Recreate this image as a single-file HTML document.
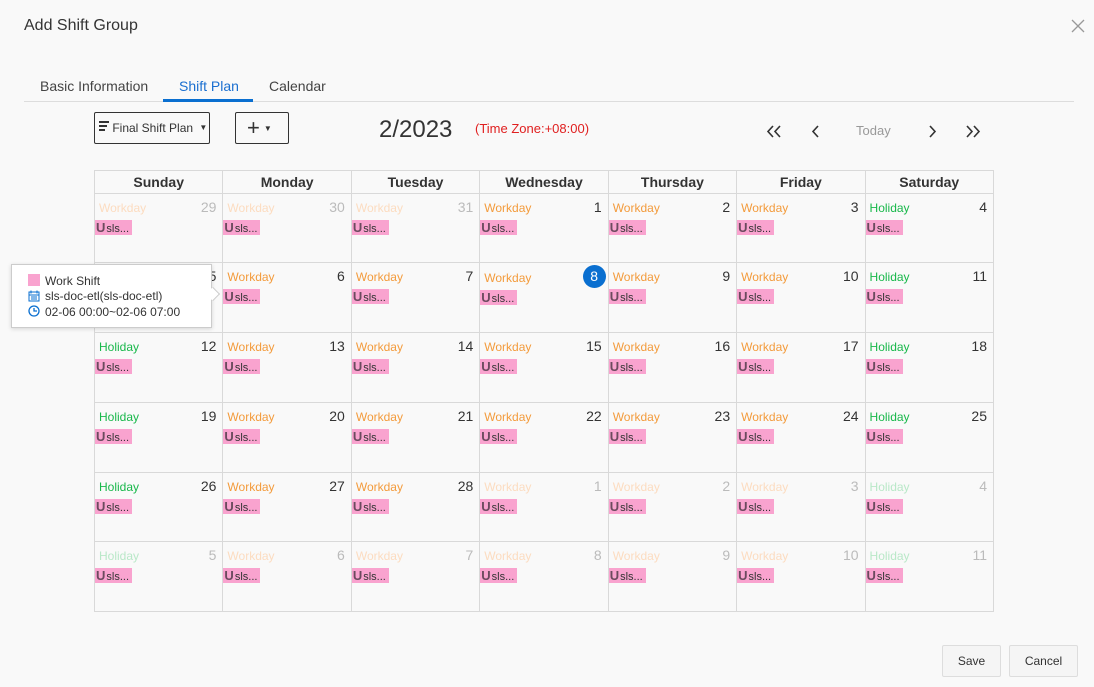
<!DOCTYPE html><html><head><style>
*{box-sizing:border-box}
body{margin:0;width:1094px;height:687px;background:#f9f9f9;font-family:"Liberation Sans",sans-serif;color:#333;position:relative;overflow:hidden}
.a{position:absolute}
table{position:absolute;left:94px;top:170px;width:900px;border-collapse:collapse;table-layout:fixed}
td,th{border:1px solid #d9d9d9;padding:0;position:relative}
th{height:23px;font-size:14px;font-weight:bold;color:#333}
td{height:69px;vertical-align:top}
tr.r70 td{height:70px}
.l{position:absolute;left:4px;top:7px;font-size:12px;color:#f39b3c}
.h .l{color:#19b84b}
.f .l{color:#fcdcc0}
.f.h .l{color:#b9e8c8}
.n{position:absolute;right:6px;top:5px;font-size:14px;color:#333}
.f .n{color:#bbb}
.t{position:absolute;left:0px;top:26px;width:37px;height:15px;background:#f9a3cf;font-size:11px;line-height:15px;padding-left:1px;color:#333;white-space:nowrap}
.t b{color:#6b4a5e;font-size:13px;margin-right:1px}
.btn{position:absolute;border:1px solid #ddd;background:#f5f5f5;font-size:12px;text-align:center;line-height:30px;color:#333;border-radius:2px}
</style></head><body>
<div class="a" style="left:24px;top:17px;font-size:16px;color:#333">Add Shift Group</div>
<svg class="a" style="left:1071px;top:19px" width="14" height="14" viewBox="0 0 14 14"><path d="M1 1L13 13M13 1L1 13" stroke="#999" stroke-width="1.3"/></svg>
<div class="a" style="left:40px;top:78px;font-size:14px;color:#444">Basic Information</div>
<div class="a" style="left:179px;top:78px;font-size:14px;color:#1a6fd0">Shift Plan</div>
<div class="a" style="left:269px;top:78px;font-size:14px;color:#444">Calendar</div>
<div class="a" style="left:24px;top:101px;width:1050px;height:1px;background:#ddd"></div>
<div class="a" style="left:163px;top:99px;width:90px;height:3px;background:#0a6fd0"></div>
<div class="a" style="left:94px;top:112px;width:116px;height:32px;border:1px solid #333;border-radius:2px;font-size:12px;line-height:29px;padding-left:4px">
<span style="display:inline-block;width:10px;vertical-align:1px"><span style="display:block;height:2px;background:#333;margin-bottom:2px"></span><span style="display:block;height:2px;background:#333;margin-bottom:2px;width:8px"></span><span style="display:block;height:2px;background:#333;width:6px"></span></span> Final Shift Plan <span style="font-size:8px;margin-left:3px;vertical-align:2px">▼</span></div>
<div class="a" style="left:235px;top:112px;width:54px;height:32px;border:1px solid #333;border-radius:2px;font-size:22px;line-height:29px;padding-left:11px">+<span style="font-size:8px;vertical-align:4px;margin-left:4px">▼</span></div>
<div class="a" style="left:379px;top:116px;font-size:24px;color:#333">2/2023</div>
<div class="a" style="left:475px;top:121px;font-size:13px;color:#e02020">(Time Zone:+08:00)</div>
<svg class="a" style="left:766px;top:125px" width="16" height="13" viewBox="0 0 16 13"><path d="M7 1L2 6.5L7 12M14 1L9 6.5L14 12" fill="none" stroke="#333" stroke-width="1.6"/></svg>
<svg class="a" style="left:810px;top:125px" width="10" height="13" viewBox="0 0 10 13"><path d="M8 1L3 6.5L8 12" fill="none" stroke="#333" stroke-width="1.6"/></svg>
<div class="a" style="left:856px;top:123px;font-size:13px;color:#999">Today</div>
<svg class="a" style="left:928px;top:125px" width="10" height="13" viewBox="0 0 10 13"><path d="M2 1L7 6.5L2 12" fill="none" stroke="#333" stroke-width="1.6"/></svg>
<svg class="a" style="left:965px;top:125px" width="16" height="13" viewBox="0 0 16 13"><path d="M2 1L7 6.5L2 12M9 1L14 6.5L9 12" fill="none" stroke="#333" stroke-width="1.6"/></svg>
<table>
<tr><th>Sunday</th><th>Monday</th><th>Tuesday</th><th>Wednesday</th><th>Thursday</th><th>Friday</th><th>Saturday</th></tr>
<tr>
<td class="f"><span class="l">Workday</span><span class="n">29</span><div class="t"><b>U</b>sls...</div></td>
<td class="f"><span class="l">Workday</span><span class="n">30</span><div class="t"><b>U</b>sls...</div></td>
<td class="f"><span class="l">Workday</span><span class="n">31</span><div class="t"><b>U</b>sls...</div></td>
<td><span class="l">Workday</span><span class="n">1</span><div class="t"><b>U</b>sls...</div></td>
<td><span class="l">Workday</span><span class="n">2</span><div class="t"><b>U</b>sls...</div></td>
<td><span class="l">Workday</span><span class="n">3</span><div class="t"><b>U</b>sls...</div></td>
<td class="h"><span class="l">Holiday</span><span class="n">4</span><div class="t"><b>U</b>sls...</div></td></tr>
<tr class="r70">
<td class="h"><span class="l">Holiday</span><span class="n">5</span><div class="t"><b>U</b>sls...</div></td>
<td><span class="l">Workday</span><span class="n">6</span><div class="t"><b>U</b>sls...</div></td>
<td><span class="l">Workday</span><span class="n">7</span><div class="t"><b>U</b>sls...</div></td>
<td><span class="l" style="top:8px">Workday</span><span class="n" style="right:2px;top:2px;width:23px;height:23px;border-radius:50%;background:#0a6fd0;color:#fff;text-align:center;line-height:23px">8</span><div class="t" style="top:27px"><b>U</b>sls...</div></td>
<td><span class="l">Workday</span><span class="n">9</span><div class="t"><b>U</b>sls...</div></td>
<td><span class="l">Workday</span><span class="n">10</span><div class="t"><b>U</b>sls...</div></td>
<td class="h"><span class="l">Holiday</span><span class="n">11</span><div class="t"><b>U</b>sls...</div></td></tr>
<tr class="r70">
<td class="h"><span class="l">Holiday</span><span class="n">12</span><div class="t"><b>U</b>sls...</div></td>
<td><span class="l">Workday</span><span class="n">13</span><div class="t"><b>U</b>sls...</div></td>
<td><span class="l">Workday</span><span class="n">14</span><div class="t"><b>U</b>sls...</div></td>
<td><span class="l">Workday</span><span class="n">15</span><div class="t"><b>U</b>sls...</div></td>
<td><span class="l">Workday</span><span class="n">16</span><div class="t"><b>U</b>sls...</div></td>
<td><span class="l">Workday</span><span class="n">17</span><div class="t"><b>U</b>sls...</div></td>
<td class="h"><span class="l">Holiday</span><span class="n">18</span><div class="t"><b>U</b>sls...</div></td></tr>
<tr class="r70">
<td class="h"><span class="l">Holiday</span><span class="n">19</span><div class="t"><b>U</b>sls...</div></td>
<td><span class="l">Workday</span><span class="n">20</span><div class="t"><b>U</b>sls...</div></td>
<td><span class="l">Workday</span><span class="n">21</span><div class="t"><b>U</b>sls...</div></td>
<td><span class="l">Workday</span><span class="n">22</span><div class="t"><b>U</b>sls...</div></td>
<td><span class="l">Workday</span><span class="n">23</span><div class="t"><b>U</b>sls...</div></td>
<td><span class="l">Workday</span><span class="n">24</span><div class="t"><b>U</b>sls...</div></td>
<td class="h"><span class="l">Holiday</span><span class="n">25</span><div class="t"><b>U</b>sls...</div></td></tr>
<tr>
<td class="h"><span class="l">Holiday</span><span class="n">26</span><div class="t"><b>U</b>sls...</div></td>
<td><span class="l">Workday</span><span class="n">27</span><div class="t"><b>U</b>sls...</div></td>
<td><span class="l">Workday</span><span class="n">28</span><div class="t"><b>U</b>sls...</div></td>
<td class="f"><span class="l">Workday</span><span class="n">1</span><div class="t"><b>U</b>sls...</div></td>
<td class="f"><span class="l">Workday</span><span class="n">2</span><div class="t"><b>U</b>sls...</div></td>
<td class="f"><span class="l">Workday</span><span class="n">3</span><div class="t"><b>U</b>sls...</div></td>
<td class="f h"><span class="l">Holiday</span><span class="n">4</span><div class="t"><b>U</b>sls...</div></td></tr>
<tr class="r70">
<td class="f h"><span class="l">Holiday</span><span class="n">5</span><div class="t"><b>U</b>sls...</div></td>
<td class="f"><span class="l">Workday</span><span class="n">6</span><div class="t"><b>U</b>sls...</div></td>
<td class="f"><span class="l">Workday</span><span class="n">7</span><div class="t"><b>U</b>sls...</div></td>
<td class="f"><span class="l">Workday</span><span class="n">8</span><div class="t"><b>U</b>sls...</div></td>
<td class="f"><span class="l">Workday</span><span class="n">9</span><div class="t"><b>U</b>sls...</div></td>
<td class="f"><span class="l">Workday</span><span class="n">10</span><div class="t"><b>U</b>sls...</div></td>
<td class="f h"><span class="l">Holiday</span><span class="n">11</span><div class="t"><b>U</b>sls...</div></td></tr>
</table>
<div class="a" style="left:11px;top:264px;width:201px;height:64px;background:#fff;border:1px solid #ccc;box-shadow:0 1px 4px rgba(0,0,0,.15);font-size:12px;color:#333">
<div class="a" style="left:16px;top:9px;width:12px;height:12px;background:#f9a3cf"></div>
<div class="a" style="left:33px;top:9px">Work Shift</div>
<svg class="a" style="left:16px;top:25px" width="12" height="12" viewBox="0 0 12 12"><rect x="1" y="2" width="10" height="9" fill="none" stroke="#0a6fd0"/><path d="M1 5h10M3 0.5v3M9 0.5v3M3 7h6M3 9h6" stroke="#0a6fd0"/></svg>
<div class="a" style="left:33px;top:24px">sls-doc-etl(sls-doc-etl)</div>
<svg class="a" style="left:16px;top:40px" width="12" height="12" viewBox="0 0 12 12"><circle cx="6" cy="6" r="5" fill="none" stroke="#0a6fd0" stroke-width="1.3"/><path d="M6 3v3h3" fill="none" stroke="#0a6fd0" stroke-width="1.3"/></svg>
<div class="a" style="left:33px;top:40px">02-06 00:00~02-06 07:00</div>
<div class="a" style="left:196px;top:24px;width:10px;height:10px;background:#fff;border-top:1px solid #ccc;border-right:1px solid #ccc;transform:rotate(45deg)"></div>
</div>
<div class="btn" style="left:942px;top:645px;width:59px;height:32px">Save</div>
<div class="btn" style="left:1009px;top:645px;width:69px;height:32px">Cancel</div>
</body></html>
